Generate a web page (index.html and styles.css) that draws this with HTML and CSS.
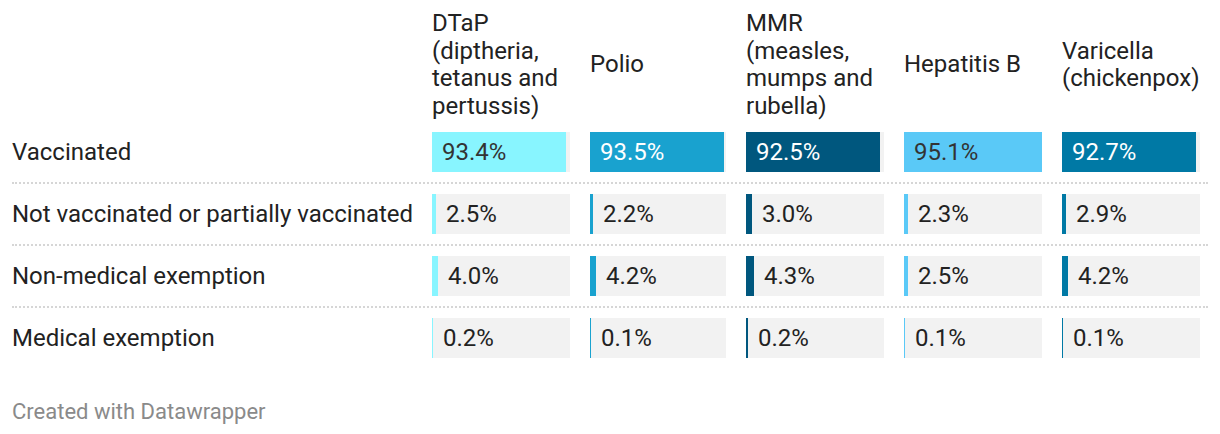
FILE: index.html
```html
<!DOCTYPE html>
<html lang="en">
<head>
<meta charset="utf-8">
<title>Vaccination rates</title>
<link rel="stylesheet" href="styles.css">
</head>
<body>
<div class="chart">
  <div class="row head">
    <div class="label"></div>
    <div class="hcell">DTaP<br>(diptheria,<br>tetanus and<br>pertussis)</div>
    <div class="hcell">Polio</div>
    <div class="hcell">MMR<br>(measles,<br>mumps and<br>rubella)</div>
    <div class="hcell">Hepatitis B</div>
    <div class="hcell">Varicella<br>(chickenpox)</div>
  </div>

  <div class="row data">
    <div class="label">Vaccinated</div>
    <div class="cell big c1" style="--w:134px">93.4%</div>
    <div class="cell big c2 inv" style="--w:134px">93.5%</div>
    <div class="cell big c3 inv" style="--w:134px">92.5%</div>
    <div class="cell big c4" style="--w:138px">95.1%</div>
    <div class="cell big c5 inv" style="--w:134px">92.7%</div>
  </div>

  <div class="row data">
    <div class="label">Not vaccinated or partially vaccinated</div>
    <div class="cell c1" style="--w:4px">2.5%</div>
    <div class="cell c2" style="--w:3px">2.2%</div>
    <div class="cell c3" style="--w:6px">3.0%</div>
    <div class="cell c4" style="--w:4px">2.3%</div>
    <div class="cell c5" style="--w:4px">2.9%</div>
  </div>

  <div class="row data">
    <div class="label">Non-medical exemption</div>
    <div class="cell c1" style="--w:6px">4.0%</div>
    <div class="cell c2" style="--w:6px">4.2%</div>
    <div class="cell c3" style="--w:8px">4.3%</div>
    <div class="cell c4" style="--w:4px">2.5%</div>
    <div class="cell c5" style="--w:6px">4.2%</div>
  </div>

  <div class="row data last">
    <div class="label">Medical exemption</div>
    <div class="cell c1" style="--w:1px">0.2%</div>
    <div class="cell c2" style="--w:1px">0.1%</div>
    <div class="cell c3" style="--w:2px">0.2%</div>
    <div class="cell c4" style="--w:1px">0.1%</div>
    <div class="cell c5" style="--w:1px">0.1%</div>
  </div>

  <div class="footer">Created with Datawrapper</div>
</div>
</body>
</html>
```

FILE: styles.css
```css
html, body {
  margin: 0;
  padding: 0;
  background: #ffffff;
}

.chart {
  padding: 0 12px;
  font-family: Roboto, "Liberation Sans", sans-serif;
  font-size: 24px;
  color: #222222;
}

.row {
  display: grid;
  grid-template-columns: 400px 138px 136px 138px 138px 138px;
  column-gap: 20px;
  align-items: center;
}

.head {
  padding: 10px 0 2px;
  line-height: 1.15;
}

.hcell {
  color: #222222;
}

.data {
  padding: 10px 0;
  border-bottom: 2px dotted #d6d6d6;
}

.data.last {
  border-bottom: none;
}

.label {
  white-space: nowrap;
  line-height: 1.2;
}

.cell {
  --c: #cccccc;
  height: 40px;
  display: flex;
  align-items: center;
  box-sizing: border-box;
  padding-left: calc(var(--w) + 10px);
  background: linear-gradient(to right, var(--c) 0, var(--c) var(--w), #f2f2f2 var(--w), #f2f2f2 100%);
  color: #222222;
  line-height: 1;
}

.cell.big {
  padding-left: 10px;
  color: #333333;
}

.cell.big.inv {
  color: #ffffff;
}

.c1 { --c: #88f5ff; }
.c2 { --c: #19a2cf; }
.c3 { --c: #00577e; }
.c4 { --c: #5ac9f7; }
.c5 { --c: #0079a5; }

.footer {
  margin-top: 31px;
  font-size: 22px;
  line-height: 1.2;
  color: #8a8a8a;
}
```
